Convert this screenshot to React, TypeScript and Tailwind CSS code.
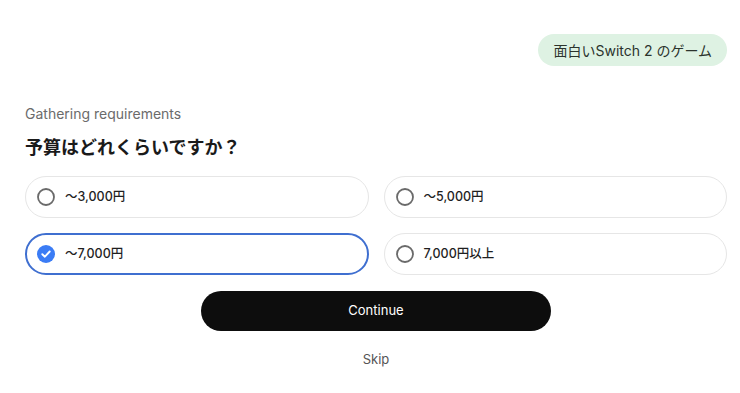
import React, { useState } from "react";

const options = ["〜3,000円", "〜5,000円", "〜7,000円", "7,000円以上"];

function Radio({ checked }: { checked: boolean }) {
  if (checked) {
    return (
      <svg width="18" height="18" viewBox="0 0 18 18" className="shrink-0">
        <circle cx="9" cy="9" r="9" fill="#3b7cf5" />
        <path d="M5.3 9.2 L7.9 11.7 L12.7 6.5" fill="none" stroke="#ffffff" strokeWidth="1.9" strokeLinecap="round" strokeLinejoin="round" />
      </svg>
    );
  }
  return (
    <svg width="18" height="18" viewBox="0 0 18 18" className="shrink-0">
      <circle cx="9" cy="9" r="8" fill="none" stroke="#6a6a6a" strokeWidth="1.8" />
    </svg>
  );
}

export default function App() {
  const [selected, setSelected] = useState(2);
  return (
    <div
      className="w-[740px] h-[393px] bg-white pl-[25px] pr-[13px] pt-[34px] flex flex-col"
      style={{ fontFamily: 'Inter, "Noto Sans CJK JP", sans-serif' }}
    >
      <div className="flex justify-end">
        <div className="h-[32px] px-[15px] rounded-full bg-[#def2e3] text-[#2b332d] text-[14px] flex items-center">
          面白いSwitch 2 のゲーム
        </div>
      </div>
      <div className="mt-[38px] text-[14px] leading-[20px] text-[#6b6b6b]">Gathering requirements</div>
      <div className="mt-[12px] text-[18px] leading-[24px] font-bold text-[#1a1a1a]">予算はどれくらいですか？</div>
      <div className="mt-[16px] grid grid-cols-2 gap-[15px]">
        {options.map((o, i) => {
          const checked = i === selected;
          return (
            <button
              key={o}
              onClick={() => setSelected(i)}
              className={
                checked
                  ? "h-[42px] rounded-full border-2 border-[#3f6fd0] pl-[10px] flex items-center gap-[10px] text-[12.5px] text-[#1f1f1f] font-medium bg-white"
                  : "h-[42px] rounded-full border border-[#e6e6e6] pl-[11px] flex items-center gap-[10px] text-[12.5px] text-[#1f1f1f] font-medium bg-white"
              }
            >
              <Radio checked={checked} />
              <span>{o}</span>
            </button>
          );
        })}
      </div>
      <div className="mt-[16px] flex justify-center">
        <button className="w-[350px] h-[40px] rounded-full bg-[#0d0d0d] text-white text-[13px]">
          Continue
        </button>
      </div>
      <div className="mt-[18px] text-center text-[13px] leading-[20px] text-[#555555]">Skip</div>
    </div>
  );
}
